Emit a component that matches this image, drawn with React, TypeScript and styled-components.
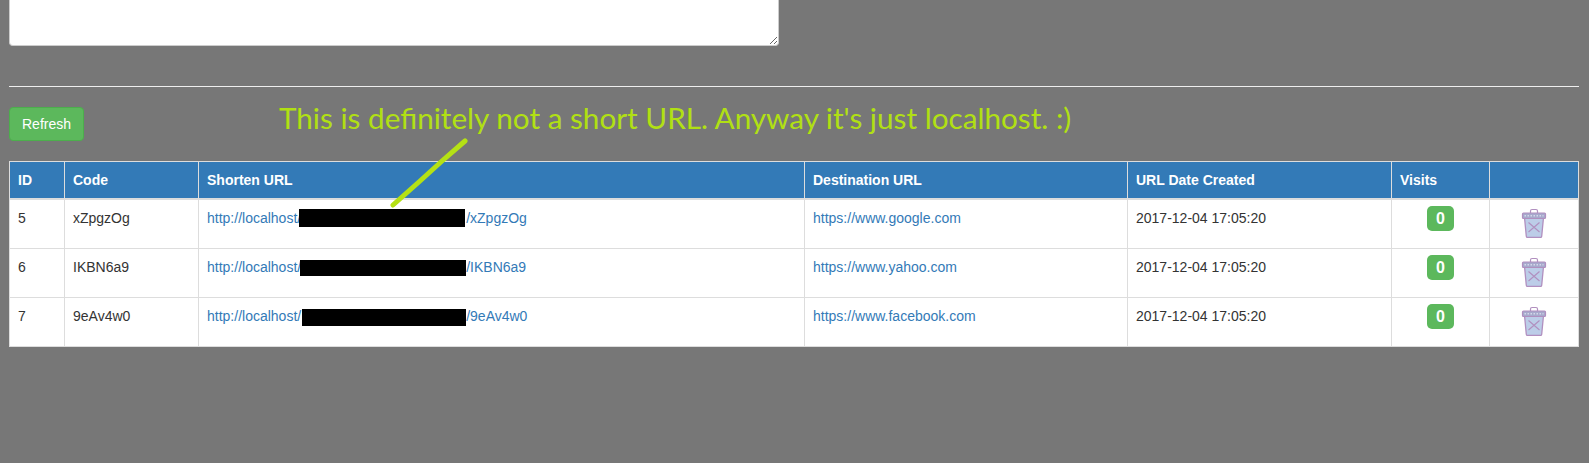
import React from 'react';
import styled, {createGlobalStyle} from "styled-components";

const GlobalStyle = createGlobalStyle`
  html, body {
    margin: 0;
    padding: 0;
    background: #777777;
  }

  body {
    font-family: "Liberation Sans", Arial, sans-serif;
    font-size: 14px;
    line-height: 20px;
    color: #333;
  }
`

type RedactionType = {
    left: number
    right: number
    width: number
    height: number
    drop: number
}

type LinkRowType = {
    id: number
    code: string
    destination: string
    redaction: RedactionType
}

const rows: LinkRowType[] = [
    {
        id: 5, code: 'xZpgzOg', destination: 'https://www.google.com',
        redaction: {left: -2, right: 1, width: 166, height: 18, drop: 4},
    },
    {
        id: 6, code: 'IKBN6a9', destination: 'https://www.yahoo.com',
        redaction: {left: -1, right: 0, width: 166, height: 16, drop: 4},
    },
    {
        id: 7, code: '9eAv4w0', destination: 'https://www.facebook.com',
        redaction: {left: 1, right: 0, width: 164, height: 17, drop: 5},
    },
]

const TrashIcon = () => (
    <TrashSvg width="28" height="30" viewBox="0 0 28 30">
        <path d="M4.500 9.500l1.800 18.800q.1 1.200 1.300 1.200h12.800q1.200 0 1.300-1.200l1.800-18.800z" fill="#bccde8" stroke="#b18fbf" strokeWidth="1.3"/>
        <rect x="2.500" y="5" width="23" height="5.500" rx="1" fill="#a7a9cc" stroke="#b18fbf" strokeWidth="1.200"/>
        <path d="M4.500 7.700h19" fill="none" stroke="#d5d9ea" strokeWidth="1.400" strokeDasharray="1.500 1.500"/>
        <path d="M10.500 5V3a1.500 1.500 0 0 1 1.500-1.500h4A1.500 1.500 0 0 1 17.500 3v2" fill="none" stroke="#b18fbf" strokeWidth="1.200"/>
        <path d="M8.500 14.500l11 9.500M19.500 14.500l-11 9.500" fill="none" stroke="#b18fbf" strokeWidth="1.100"/>
    </TrashSvg>
)

const App = () => {
    return (
        <Page>
            <GlobalStyle/>
            <Notes readOnly/>
            <Divider/>
            <RefreshButton>Refresh</RefreshButton>
            <TableArea>
                <Annotation>This is definitely not a short URL. Anyway it's just localhost. :)</Annotation>
                <Arrow width="90" height="80" viewBox="0 0 90 80">
                    <path d="M3 70L30 46L52 26L75 6" fill="none" stroke="#b5e114" strokeWidth="5" strokeLinecap="round" strokeLinejoin="round"/>
                </Arrow>
                <Table>
                    <colgroup>
                        <col width="55"/>
                        <col width="134"/>
                        <col width="606"/>
                        <col width="323"/>
                        <col width="264"/>
                        <col width="98"/>
                        <col width="89"/>
                    </colgroup>
                    <thead>
                    <tr>
                        <Th>ID</Th>
                        <Th>Code</Th>
                        <Th>Shorten URL</Th>
                        <Th>Destination URL</Th>
                        <Th>URL Date Created</Th>
                        <Th>Visits</Th>
                        <Th/>
                    </tr>
                    </thead>
                    <tbody>
                    {rows.map(row => (
                        <tr key={row.id}>
                            <Td>{row.id}</Td>
                            <Td>{row.code}</Td>
                            <Td>
                                <Anchor href="#">
                                    http://localhost/
                                    <Redaction
                                        $left={row.redaction.left}
                                        $right={row.redaction.right}
                                        $width={row.redaction.width}
                                        $height={row.redaction.height}
                                        $drop={row.redaction.drop}
                                    />
                                    /{row.code}
                                </Anchor>
                            </Td>
                            <Td><Anchor href="#">{row.destination}</Anchor></Td>
                            <Td>2017-12-04 17:05:20</Td>
                            <CenterTd><Badge>0</Badge></CenterTd>
                            <CenterTd><TrashIcon/></CenterTd>
                        </tr>
                    ))}
                    </tbody>
                </Table>
            </TableArea>
        </Page>
    );
};

export default App;

const Page = styled.div`
  box-sizing: border-box;
  height: 463px;
  padding: 0 10px 0 9px;
  overflow: hidden;
`

const Notes = styled.textarea`
  display: block;
  box-sizing: border-box;
  width: 770px;
  height: 46px;
  background: #fff;
  border: 1px solid #ccc;
  border-top: none;
  border-radius: 0 0 4px 4px;
  outline: none;
`

const Divider = styled.hr`
  margin: 40px 0 20px;
  border: 0;
  border-top: 1px solid #eee;
`

const RefreshButton = styled.button`
  display: block;
  box-sizing: border-box;
  width: 75px;
  height: 34px;
  padding: 6px 12px;
  color: #fff;
  background: #5cb85c;
  border: 1px solid #4cae4c;
  border-radius: 4px;
  font-family: inherit;
  font-size: 14px;
  line-height: 20px;
`

const TableArea = styled.div`
  position: relative;
  margin-top: 20px;
`

const Annotation = styled.div`
  position: absolute;
  left: 270px;
  top: -61px;
  font-family: Lato, "Open Sans", sans-serif;
  font-size: 29.7px;
  line-height: 36px;
  color: #b1e013;
  white-space: nowrap;
`

const Arrow = styled.svg`
  position: absolute;
  left: 381px;
  top: -26px;
  z-index: 2;
`

const Table = styled.table`
  width: 1569px;
  table-layout: fixed;
  border-collapse: collapse;
  background: #fff;
`

const Th = styled.th`
  height: 36px;
  padding: 8px;
  box-sizing: border-box;
  text-align: left;
  font-weight: 700;
  color: #fff;
  background: #337ab7;
  border: 1px solid #ddd;
  border-bottom-width: 2px;
`

const Td = styled.td`
  height: 49px;
  padding: 8px;
  box-sizing: border-box;
  vertical-align: top;
  border: 1px solid #ddd;
`

const CenterTd = styled(Td)`
  padding: 6px 8px 0;
  text-align: center;
`

const Anchor = styled.a`
  color: #337ab7;
  text-decoration: none;
`

const Redaction = styled.span<{ $left: number, $right: number, $width: number, $height: number, $drop: number }>`
  display: inline-block;
  width: ${props => props.$width}px;
  height: ${props => props.$height}px;
  margin: 0 ${props => props.$right}px 0 ${props => props.$left}px;
  vertical-align: -${props => props.$drop}px;
  background: #000;
`

const Badge = styled.span`
  display: block;
  width: 27px;
  margin: 0 auto;
  box-sizing: border-box;
  font-size: 16px;
  font-weight: 700;
  line-height: 25px;
  color: #fff;
  background: #5cb85c;
  border-radius: 5px;
`

const TrashSvg = styled.svg`
  display: block;
  margin: 2px auto 0;
`
